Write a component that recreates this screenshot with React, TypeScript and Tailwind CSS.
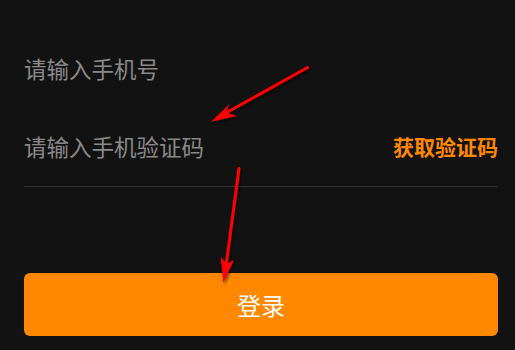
import React from "react";

export default function App() {
  const font = { fontFamily: '"Noto Sans CJK SC", "Noto Sans", sans-serif' };
  return (
    <div className="relative w-[515px] h-[350px] overflow-hidden bg-[#121212]" style={font}>
      <div className="pl-[24px] pr-[17px] pt-[30px]">
        <div className="flex items-center h-[76px]">
          <span className="text-[22.5px] leading-none text-[#8a8a8a]">请输入手机号</span>
        </div>
        <div className="mt-[2px] flex items-center justify-between h-[79px] border-b border-[#333333] pb-[2px]">
          <span className="text-[22.5px] leading-none text-[#8a8a8a]">请输入手机验证码</span>
          <span className="text-[21px] leading-none font-bold text-[#ff8800]">获取验证码</span>
        </div>
        <button className="mt-[86px] w-full h-[63px] rounded-[6px] bg-[#ff8800] flex items-center justify-center">
          <span className="text-[24px] leading-none text-white">登录</span>
        </button>
      </div>
      <svg className="absolute left-0 top-0 pointer-events-none" width="515" height="350" viewBox="0 0 515 350">
        <defs>
          <filter id="sh" x="-20%" y="-20%" width="140%" height="140%">
            <feDropShadow dx="1" dy="2" stdDeviation="1.5" floodColor="#000" floodOpacity="0.6" />
          </filter>
        </defs>
        <g filter="url(#sh)" fill="#ff0000" stroke="#ff0000" strokeLinecap="round">
          <line x1="307.5" y1="67.5" x2="224" y2="114" strokeWidth="3" />
          <path d="M211 121.7 L229.3 104.3 L226 112.5 L236.7 116 Z" stroke="none" />
          <line x1="239" y1="168.5" x2="226" y2="266" strokeWidth="3" />
          <path d="M223.3 282.7 L220.7 256.7 L226.5 264 L234 260 Z" stroke="none" />
        </g>
      </svg>
    </div>
  );
}
